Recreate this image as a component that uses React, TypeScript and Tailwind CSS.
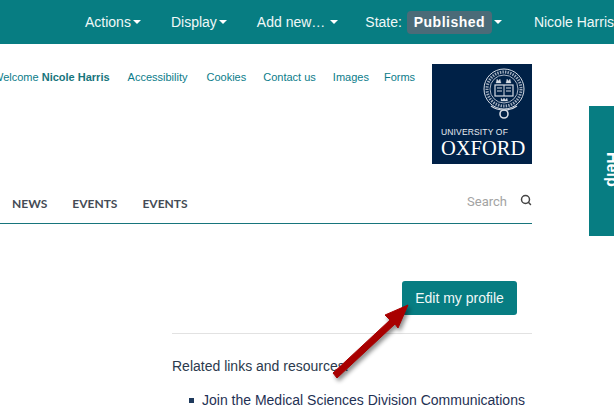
import { Search } from "lucide-react";

function Caret({ className = "ml-[2px]" }: { className?: string }) {
  return <span className={`inline-block w-0 h-0 border-x-[4px] border-x-transparent border-t-[4px] border-t-white ${className}`} />;
}

function TopBar() {
  return (
    <div className="h-[44px] bg-[#077d82] flex items-center pl-[85px] text-[14px] text-[#f0f8f8] whitespace-nowrap">
      <span className="flex items-center">Actions<Caret /></span>
      <span className="flex items-center ml-[30px]">Display<Caret /></span>
      <span className="flex items-center ml-[30px]">Add new…<Caret className="ml-[5px]" /></span>
      <span className="ml-[27px]">State:</span>
      <span className="ml-[5px] h-[23px] w-[87px] rounded-[4px] bg-[#4b6b78] flex items-center justify-center font-bold text-white tracking-[0.5px]">Published</span>
      <Caret className="ml-[2px]" />
      <span className="ml-[32px]">Nicole Harris</span>
    </div>
  );
}

function OxfordLogo() {
  return (
    <div className="w-[100px] h-[100px] bg-[#002147] flex flex-col items-center relative shrink-0">
      <svg viewBox="0 0 44 56" className="w-[44px] h-[56px] mt-[3px] ml-[44px]" fill="none" stroke="#d5dbe4">
        <circle cx="22" cy="22" r="20" strokeWidth="1" />
        <circle cx="22" cy="22" r="14" strokeWidth="0.8" />
        <circle cx="22" cy="22" r="17" strokeWidth="3" strokeDasharray="1.4 1.2" opacity="0.75" />
        <path d="M15 12l1.5 2 1.5-2 1 4h-5zM25 12l1.5 2 1.5-2 1 4h-5z" fill="#d5dbe4" strokeWidth="0.3" />
        <rect x="13" y="18" width="18" height="11" strokeWidth="1.2" />
        <path d="M22 18v11M15 21h5M15 24h5M24 21h5M24 24h5" strokeWidth="1" />
        <path d="M19 31l1.5 2 1.5-2 1.5 2 1.5-2 .6 3h-6.6z" fill="#d5dbe4" strokeWidth="0.3" />
        <path d="M9 39c4 3 9 4 13 4s9-1 13-4" strokeWidth="1.2" />
        <circle cx="22" cy="47" r="4" strokeWidth="1.6" />
      </svg>
      <div className="absolute left-[9px] top-[62px] text-[8.5px] leading-[12px] tracking-[0.15px] text-[#e8ecf1] whitespace-nowrap">UNIVERSITY OF</div>
      <div className="absolute left-[9px] top-[72px] text-[20.5px] leading-[24px] text-white font-['Liberation_Serif',serif]">OXFORD</div>
    </div>
  );
}

function Header() {
  return (
    <div className="w-[532px] flex justify-between pt-[20px] h-[120px]">
      <div className="flex text-[11px] leading-[26px] text-[#0b7c8a] whitespace-nowrap ml-[-7px]">
        <span>Welcome <b className="text-[#17757c]">Nicole Harris</b></span>
        <span className="ml-[18px]">Accessibility</span>
        <span className="ml-[19px]">Cookies</span>
        <span className="ml-[17px]">Contact us</span>
        <span className="ml-[17px]">Images</span>
        <span className="ml-[15px]">Forms</span>
      </div>
      <OxfordLogo />
    </div>
  );
}

function NavRow() {
  return (
    <div className="w-[532px] h-[60px] border-b border-[#17757c] flex items-end justify-between pl-[12px] pb-[12px]">
      <div className="flex gap-[25px] font-['Lato',sans-serif] font-bold text-[12px] leading-[15px] text-[#444b55]">
        <span>NEWS</span>
        <span>EVENTS</span>
        <span>EVENTS</span>
      </div>
      <div className="flex items-center mb-[1px]">
        <span className="font-['Roboto',sans-serif] text-[13px] leading-[16px] text-[#a3a3a3]">Search</span>
        <Search className="w-[12px] h-[12px] text-[#444] ml-[13px] mb-[4px]" strokeWidth={3} />
      </div>
    </div>
  );
}

function Content() {
  return (
    <div className="w-[532px] pl-[172px] pt-[57px]">
      <div className="flex justify-end pr-[15px]">
        <button className="w-[115px] h-[34px] rounded-[3px] bg-[#077d82] text-[14px] text-[#f0f8f8]">Edit my profile</button>
      </div>
      <div className="h-px bg-[#e2e2e2] mt-[18px]" />
      <p className="mt-[24px] text-[14px] leading-[16px] text-[#2b3a4d] whitespace-nowrap">Related links and resources:</p>
      <ul className="mt-[18px] pl-[17px] text-[14px] leading-[16px] text-[#1f3154] whitespace-nowrap">
        <li className="flex items-center">
          <span className="w-[5px] h-[5px] bg-[#1f3a5c] mr-[8px]" />
          Join the Medical Sciences Division Communications
        </li>
      </ul>
    </div>
  );
}

function RedArrow() {
  return (
    <svg className="absolute left-[325px] top-[298px] overflow-visible drop-shadow-[2px_3px_2px_rgba(0,0,0,0.45)]" width="92" height="90" viewBox="325 298 92 90">
      <path d="M408 305L385 315L390 320L333 373L337 378L395 324L398 328Z" fill="#a80000" stroke="#a80000" strokeLinejoin="round" />
    </svg>
  );
}

export default function App() {
  return (
    <div className="relative w-[614px] h-[414px] overflow-hidden bg-white font-['Liberation_Sans',sans-serif]">
      <TopBar />
      <Header />
      <NavRow />
      <Content />
      <RedArrow />
      <div className="absolute left-[589px] top-[106px] w-[25px] h-[130px] bg-[#077d82] overflow-hidden">
        <span className="absolute left-[14px] top-[46px] [writing-mode:vertical-rl] text-[16px] font-bold text-white leading-[18px]">Help</span>
      </div>
    </div>
  );
}
